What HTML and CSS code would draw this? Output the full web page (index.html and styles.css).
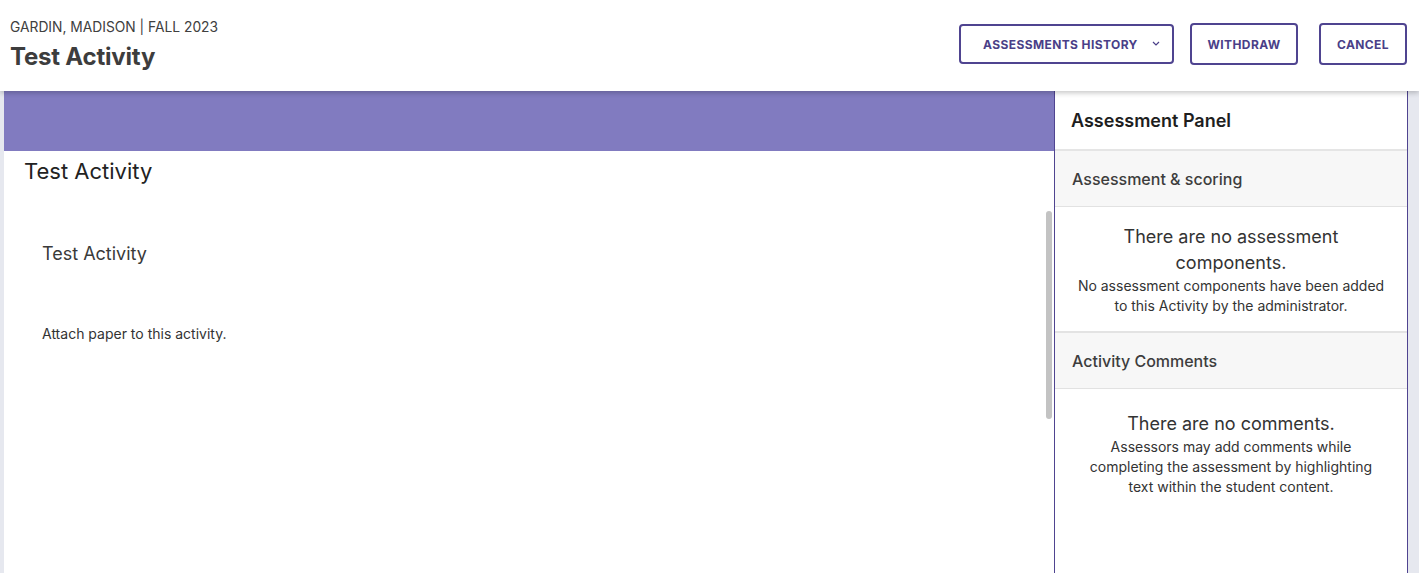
FILE: index.html
```html
<!DOCTYPE html>
<html>
<head>
<meta charset="utf-8">
<link rel="stylesheet" href="styles.css">
</head>
<body>
<header class="topbar">
  <div class="titles">
    <div class="meta">GARDIN, MADISON | FALL 2023</div>
    <h1 class="page-title">Test Activity</h1>
  </div>
  <div class="actions">
    <button class="btn btn-history"><span>ASSESSMENTS HISTORY</span>
      <svg class="chev" width="8" height="5" viewBox="0 0 8 5"><path d="M1 1l3 3 3-3" fill="none" stroke="currentColor" stroke-width="1.2"/></svg>
    </button>
    <button class="btn btn-withdraw">WITHDRAW</button>
    <button class="btn btn-cancel">CANCEL</button>
  </div>
</header>
<main class="workspace">
  <section class="content">
    <div class="banner"></div>
    <h2 class="content-title">Test Activity</h2>
    <div class="activity">
      <h3 class="activity-title">Test Activity</h3>
      <p class="activity-text">Attach paper to this activity.</p>
    </div>
    <div class="scroll-thumb"></div>
  </section>
  <aside class="panel">
    <div class="panel-head">Assessment Panel</div>
    <div class="section-head">Assessment &amp; scoring</div>
    <div class="section-body">
      <div class="empty-title">There are no assessment components.</div>
      <div class="empty-text">No assessment components have been added to this Activity by the administrator.</div>
    </div>
    <div class="section-head">Activity Comments</div>
    <div class="section-body comments">
      <div class="empty-title">There are no comments.</div>
      <div class="empty-text">Assessors may add comments while completing the assessment by highlighting text within the student content.</div>
    </div>
  </aside>
</main>
</body>
</html>
```
FILE: styles.css
```css
* { box-sizing: border-box; }
html, body { margin: 0; padding: 0; }
body {
  font-family: Inter, "Noto Sans", sans-serif;
  background: #e6e8ef;
  width: 1419px;
  height: 573px;
  overflow: hidden;
  color: #333;
}
.topbar {
  position: relative;
  z-index: 2;
  height: 91px;
  background: #fff;
  display: flex;
  justify-content: space-between;
  align-items: flex-start;
  padding: 0 12px 0 10px;
  box-shadow: 0 2px 5px rgba(0,0,0,0.22);
}
.titles { padding-top: 17px; }
.meta {
  font-size: 13.8px;
  color: #404040;
  line-height: 20px;
}
.page-title {
  margin: 5px 0 0;
  font-size: 24px;
  font-weight: 700;
  letter-spacing: -0.2px;
  color: #3d3d3d;
  line-height: 30px;
}
.actions {
  display: flex;
  align-items: flex-start;
  padding-top: 23px;
}
.btn {
  font-family: Inter, "Noto Sans", sans-serif;
  font-size: 12px;
  font-weight: 700;
  letter-spacing: 0.4px;
  color: #4a3f88;
  background: #fff;
  border: 2px solid #4f4490;
  border-radius: 4px;
  height: 42px;
  padding: 0;
  white-space: nowrap;
  cursor: pointer;
}
.btn-history {
  margin-top: 1px;
  height: 40px;
  width: 215px;
  display: flex;
  align-items: center;
  padding: 0 0 0 22px;
}
.chev { margin-left: 14px; margin-top: -2px; color: #4a3f88; }
.btn-withdraw { margin-left: 16px; width: 108px; }
.btn-cancel { margin-left: 21px; width: 88px; }

.workspace {
  display: flex;
  height: 482px;
  padding-left: 4px;
  padding-right: 11px;
}
.content {
  position: relative;
  width: 1050px;
  background: #fff;
}
.banner {
  height: 60px;
  background: #817bc0;
}
.content-title {
  margin: 0;
  padding: 7px 0 0 20px;
  font-size: 22px;
  font-weight: 400;
  color: #222;
  line-height: 27px;
}
.activity { padding: 57px 0 0 38px; }
.activity-title {
  margin: 0;
  font-size: 18px;
  font-weight: 400;
  color: #3a3a3a;
  line-height: 24px;
}
.activity-text {
  margin: 58px 0 0;
  font-size: 14px;
  color: #333;
  line-height: 20px;
}
.scroll-thumb {
  position: absolute;
  right: 2px;
  top: 120px;
  width: 6px;
  height: 208px;
  border-radius: 3px;
  background: #c3c3c3;
}
.panel {
  width: 354px;
  background: #fff;
  border-left: 1px solid #4f4490;
  border-right: 1px solid #4f4490;
}
.panel-head {
  height: 60px;
  display: flex;
  align-items: center;
  padding-left: 16px;
  padding-top: 0;
  font-size: 18px;
  font-weight: 600;
  color: #1e1e1e;
  border-bottom: 2px solid #e5e5e5;
}
.section-head {
  height: 56px;
  display: flex;
  align-items: center;
  padding-left: 17px;
  background: #f7f7f7;
  border-bottom: 1px solid #e2e2e2;
  font-size: 16px;
  font-weight: 500;
  color: #3d3d3d;
}
.section-body {
  text-align: center;
  padding: 17px 16px 15px;
  border-bottom: 2px solid #e3e3e3;
}
.section-body.comments { border-bottom: none; padding-top: 22px; }
.empty-title {
  font-size: 18px;
  color: #333;
  line-height: 26px;
  padding: 0 50px;
}
.comments .empty-title { padding: 0; }
.empty-text {
  font-size: 14px;
  color: #333;
  line-height: 20px;
  padding: 0 4px;
}
.comments .empty-text { padding: 0 17px; }
```
